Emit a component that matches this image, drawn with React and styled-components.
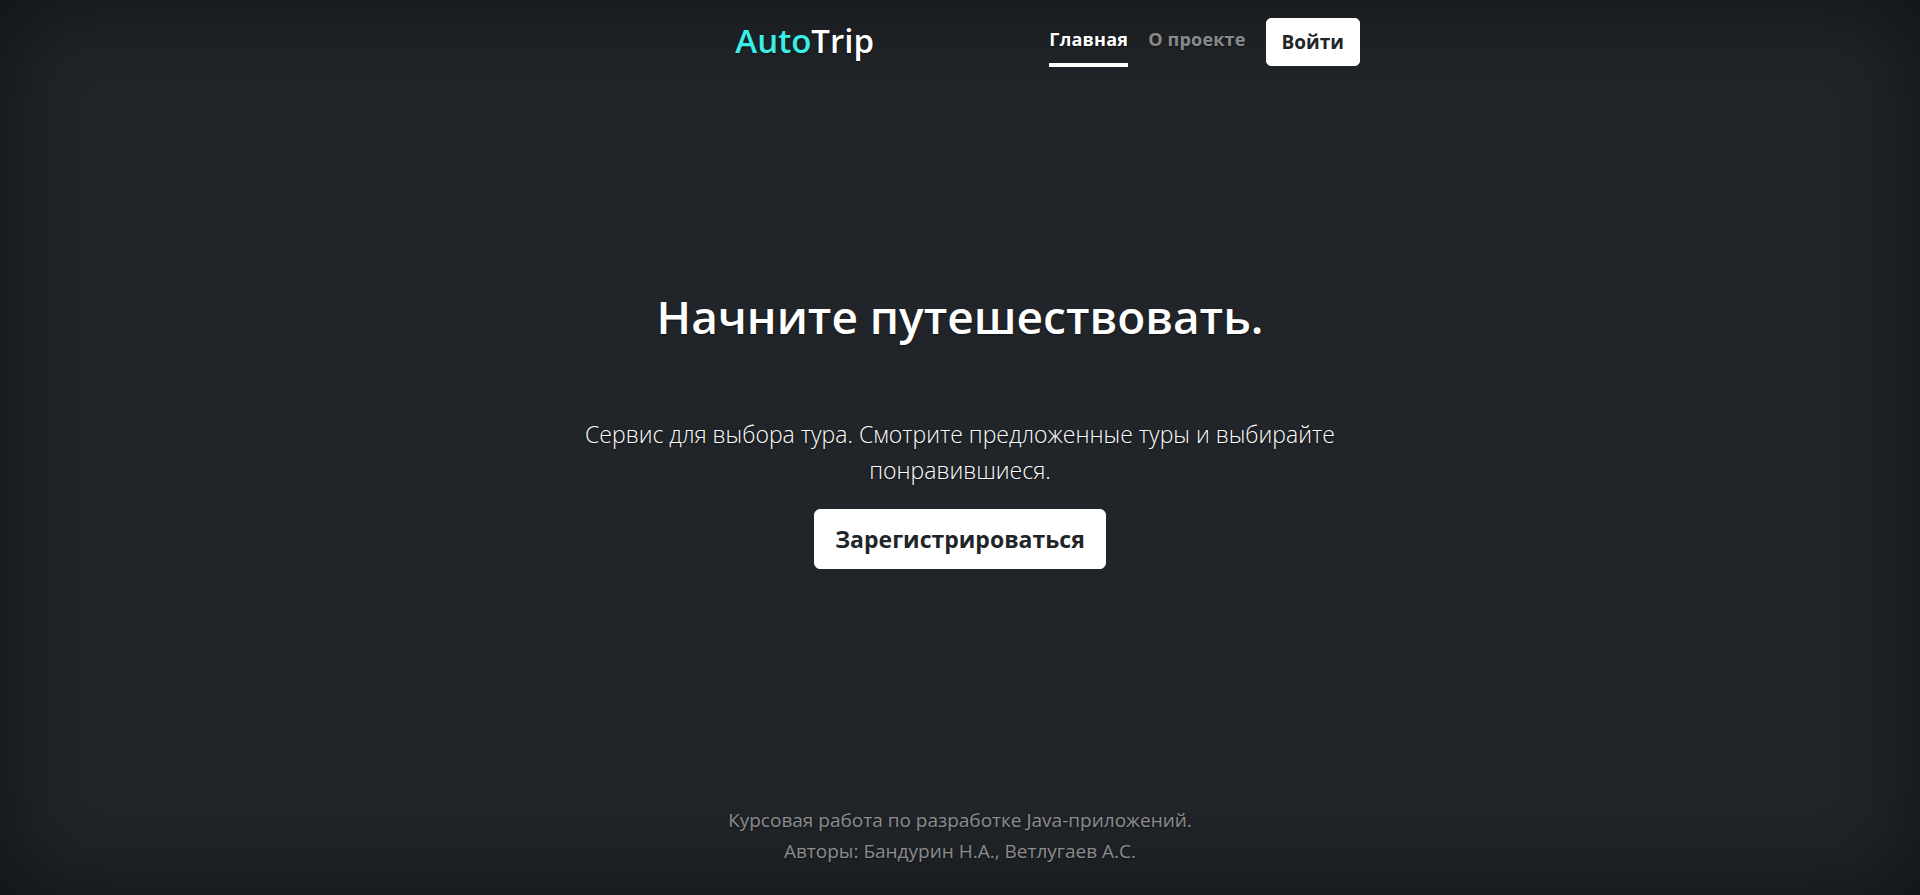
import styled, { createGlobalStyle } from "styled-components";

const Global = createGlobalStyle`
  html, body {
    margin: 0;
    height: 100%;
  }
  body {
    background-color: #212529;
    box-shadow: inset 0 0 100px rgba(0, 0, 0, 0.5);
    font-family: "Open Sans", "Noto Sans", sans-serif;
    color: #fff;
    text-shadow: 0 1px 2px rgba(0, 0, 0, 0.5);
  }
  #root {
    height: 100%;
  }
`;

export default function App() {
  return (
    <>
      <Global />
      <Cover>
        <Header>
          <LogoBox>
            <Logo>
              <Auto>Auto</Auto>Trip
            </Logo>
          </LogoBox>
          <Nav>
            <NavLink active>Главная</NavLink>
            <NavLink>О проекте</NavLink>
            <LoginButton>Войти</LoginButton>
          </Nav>
        </Header>

        <Main>
          <Title>Начните путешествовать.</Title>
          <Lead>
            Сервис для выбора тура. Смотрите предложенные туры и выбирайте
            понравившиеся.
          </Lead>
          <RegisterButton>Зарегистрироваться</RegisterButton>
        </Main>

        <Footer>
          <p>Курсовая работа по разработке Java-приложений.</p>
          <p>Авторы: Бандурин Н.А., Ветлугаев А.С.</p>
        </Footer>
      </Cover>
    </>
  );
}

const Cover = styled.div`
  max-width: 840px;
  height: 100%;
  margin: 0 auto;
  padding: 18px 20px 0;
  box-sizing: border-box;
  display: flex;
  flex-direction: column;
`;

const Header = styled.header`
  display: flex;
  align-items: flex-start;
`;

const LogoBox = styled.div`
  flex: 1;
  display: flex;
  justify-content: center;
`;

const Logo = styled.h3`
  margin: 0;
  padding-top: 3px;
  font-size: 33px;
  font-weight: 600;
  line-height: 1.2;
  color: #fff;
`;

const Auto = styled.span`
  color: #3af0e6;
`;

const Nav = styled.nav`
  display: flex;
  align-items: flex-start;
  gap: 20px;
`;

const NavLink = styled.a`
  padding: 8px 0 10px;
  font-size: 18px;
  font-weight: 700;
  line-height: 27px;
  letter-spacing: 0.2px;
  color: ${props => props.active ? "#fff" : "rgba(255, 255, 255, 0.5)"};
  border-bottom: 4px solid ${props => props.active ? "#fff" : "transparent"};
  cursor: pointer;
`;

const LoginButton = styled.button`
  height: 48px;
  padding: 0 15px;
  font-family: inherit;
  font-size: 19px;
  font-weight: 700;
  color: #212529;
  background: #fff;
  border: 1px solid #fff;
  border-radius: 5px;
  text-shadow: none;
  cursor: pointer;
`;

const Main = styled.main`
  flex: 1;
  display: flex;
  flex-direction: column;
  align-items: center;
  justify-content: center;
  text-align: center;
  padding-bottom: 14px;
`;

const Title = styled.h1`
  margin: 0 0 72px;
  font-size: 46px;
  font-weight: 600;
  line-height: 1.2;
`;

const Lead = styled.p`
  margin: 0 0 21px;
  font-size: 23px;
  font-weight: 300;
  line-height: 36px;
`;

const RegisterButton = styled.button`
  height: 60px;
  padding: 0 20px;
  font-family: inherit;
  font-size: 23px;
  font-weight: 700;
  color: #212529;
  background: #fff;
  border: 1px solid #fff;
  border-radius: 6px;
  text-shadow: none;
  cursor: pointer;
`;

const Footer = styled.footer`
  padding-bottom: 28px;
  text-align: center;
  color: rgba(255, 255, 255, 0.5);
  font-size: 19px;
  line-height: 31px;

  p {
    margin: 0;
  }
`;
